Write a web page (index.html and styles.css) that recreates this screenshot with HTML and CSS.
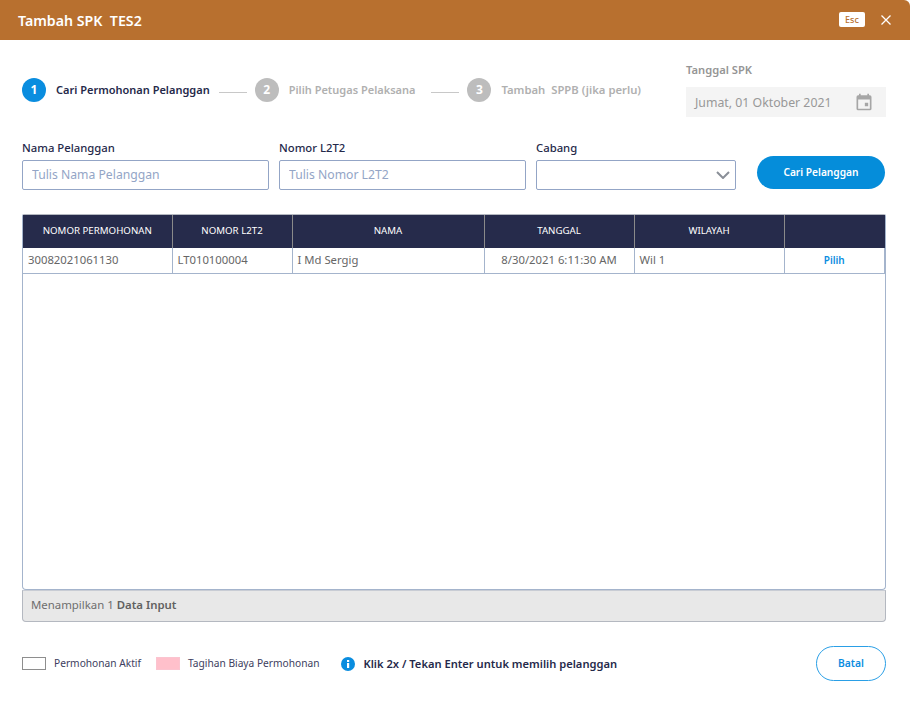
FILE: index.html
```html
<!DOCTYPE html>
<html lang="en">
<head>
    <meta charset="UTF-8">
    <meta name="viewport" content="width=device-width, initial-scale=1.0">
    <title>Tambah SPK</title>
    <link rel="stylesheet" href="styles.css">
</head>
<body>
    <header class="modalHeader">
        <h1 class="modalTitle">Tambah SPK&nbsp; TES2</h1>
        <span class="escKey">Esc</span>
        <svg class="closeIcon" width="10" height="10" viewBox="0 0 10 10"><path d="M0.5 0.5L9.5 9.5M9.5 0.5L0.5 9.5" stroke="#fff" stroke-width="1.3" fill="none"/></svg>
    </header>

    <main class="modalBody">
        <section class="topRow">
            <div class="stepper">
                <span class="stepNum stepActive">1</span>
                <span class="stepText stepTextActive">Cari Permohonan Pelanggan</span>
                <span class="stepLine"></span>
                <span class="stepNum">2</span>
                <span class="stepText">Pilih Petugas Pelaksana</span>
                <span class="stepLine stepLineWide"></span>
                <span class="stepNum">3</span>
                <span class="stepText stepTextLast">Tambah&nbsp; SPPB (jika perlu)</span>
            </div>
            <div class="dateField">
                <label class="dateLabel">Tanggal SPK</label>
                <div class="dateBox">
                    <span>Jumat, 01 Oktober 2021</span>
                    <svg width="20" height="20" viewBox="0 0 24 24"><path fill="#a6a6a6" d="M19 4h-1V2h-2v2H8V2H6v2H5a2 2 0 0 0-2 2v14a2 2 0 0 0 2 2h14a2 2 0 0 0 2-2V6a2 2 0 0 0-2-2zm0 16H5V9h14v11zm-6-7h4v4h-4z"/></svg>
                </div>
            </div>
        </section>

        <section class="searchRow">
            <div class="field fieldWide">
                <label>Nama Pelanggan</label>
                <input type="text" placeholder="Tulis Nama Pelanggan">
            </div>
            <div class="field fieldWide">
                <label>Nomor L2T2</label>
                <input type="text" placeholder="Tulis Nomor L2T2">
            </div>
            <div class="field fieldSelect">
                <label>Cabang</label>
                <div class="selectBox">
                    <svg width="14" height="8" viewBox="0 0 14 8"><path d="M1 1l6 6 6-6" stroke="#8a8f98" stroke-width="2" fill="none"/></svg>
                </div>
            </div>
            <button class="btnSearch" type="button">Cari Pelanggan</button>
        </section>

        <section class="gridWrap">
            <table class="dataGrid">
                <thead>
                    <tr>
                        <th class="colNo">NOMOR PERMOHONAN</th>
                        <th class="colL2">NOMOR L2T2</th>
                        <th class="colNama">NAMA</th>
                        <th class="colTgl">TANGGAL</th>
                        <th class="colWil">WILAYAH</th>
                        <th class="colAct"></th>
                    </tr>
                </thead>
                <tbody>
                    <tr>
                        <td>30082021061130</td>
                        <td>LT010100004</td>
                        <td>I Md Sergig</td>
                        <td class="center">8/30/2021 6:11:30 AM</td>
                        <td>Wil 1</td>
                        <td class="center"><a class="pickLink">Pilih</a></td>
                    </tr>
                </tbody>
            </table>
        </section>
        <div class="gridFooter">Menampilkan 1 <b>Data Input</b></div>

        <footer class="bottomRow">
            <span class="legendBox"></span>
            <span class="legendText">Permohonan Aktif</span>
            <span class="legendBox legendPink"></span>
            <span class="legendText">Tagihan Biaya Permohonan</span>
            <svg class="infoIcon" width="14" height="14" viewBox="0 0 14 14"><circle cx="7" cy="7" r="7" fill="#0a8ddf"/><rect x="6" y="6" width="2.2" height="5" fill="#fff"/><rect x="6" y="3" width="2.2" height="2" fill="#fff"/></svg>
            <span class="hint">Klik 2x / Tekan Enter untuk memilih pelanggan</span>
            <button class="btnCancel" type="button">Batal</button>
        </footer>
    </main>
</body>
</html>
```

FILE: styles.css
```css
* {
    box-sizing: border-box;
}
body {
    margin: 0;
    font-family: "Noto Sans", sans-serif;
    background-color: white;
    color: #25294a;
}
.modalHeader {
    height: 40px;
    background-color: #b8702f;
    border-top-right-radius: 6px;
    display: flex;
    align-items: center;
    padding: 0 19px 0 18px;
}
.modalTitle {
    margin: 0;
    flex: 1;
    font-size: 14.2px;
    font-weight: 600;
    color: white;
}
.escKey {
    width: 26px;
    height: 15px;
    margin-top: -1px;
    background-color: white;
    border-radius: 2px;
    color: #b8702f;
    font-size: 9px;
    font-weight: 500;
    line-height: 15px;
    text-align: center;
}
.closeIcon {
    margin-left: 16px;
}
.modalBody {
    padding: 24px 24px 0 22px;
}
.topRow {
    display: flex;
    justify-content: space-between;
    height: 53px;
}
.stepper {
    display: flex;
    align-items: center;
    height: 24px;
    margin-top: 14px;
}
.stepNum {
    width: 24px;
    height: 24px;
    border-radius: 50%;
    background-color: #bdbdbd;
    color: white;
    font-size: 12px;
    font-weight: 700;
    line-height: 24px;
    text-align: center;
}
.stepActive {
    background-color: #0a8ddf;
}
.stepText {
    margin: 0 0 2px 10px;
    font-size: 11px;
    font-weight: 600;
    color: #b0b0b0;
    white-space: nowrap;
}
.stepTextActive {
    color: #25294a;
}
.stepTextLast {
    font-size: 11.3px;
}
.stepLine {
    width: 28px;
    height: 1px;
    margin: 4px 8px 0 9px;
    background-color: #c8c8c8;
}
.stepLineWide {
    margin-left: 16px;
}
.dateField {
    width: 200px;
}
.dateLabel {
    display: block;
    height: 23px;
    font-size: 11.2px;
    font-weight: 600;
    line-height: 12px;
    color: #959595;
}
.dateBox {
    height: 30px;
    background-color: #f4f4f4;
    display: flex;
    align-items: center;
    justify-content: space-between;
    padding: 0 12px 0 9px;
    font-size: 12.3px;
    color: #989898;
}
.searchRow {
    display: flex;
    align-items: flex-end;
    gap: 10px;
    margin-top: 23px;
}
.field label {
    display: block;
    height: 20px;
    font-size: 11.3px;
    font-weight: 500;
    line-height: 16px;
}
.fieldWide {
    width: 247px;
}
.fieldSelect {
    width: 200px;
}
.field input, .selectBox {
    display: flex;
    align-items: center;
    justify-content: flex-end;
    width: 100%;
    height: 30px;
    padding: 0 9px 1px;
    border: 1px solid #93a5c6;
    border-radius: 2px;
    font-family: inherit;
    font-size: 12.2px;
    background-color: white;
}
.selectBox {
    padding-right: 5px;
}
.field input::placeholder {
    color: #93a5c6;
    opacity: 1;
}
.btnSearch {
    width: 128px;
    height: 33px;
    margin: 0 1px 1px 11px;
    padding: 0 0 2px;
    border: none;
    border-radius: 17px;
    background-color: #058dda;
    color: white;
    font-family: inherit;
    font-size: 10.2px;
    font-weight: 600;
    cursor: pointer;
}
.gridWrap {
    height: 376px;
    margin-top: 24px;
    border: 1px solid #a4b4cc;
    border-top-color: #b4b8c0;
    border-radius: 2px 2px 4px 4px;
}
.dataGrid {
    width: 100%;
    border-collapse: collapse;
    table-layout: fixed;
}
.dataGrid th {
    height: 33px;
    padding: 0 0 2px;
    background-color: #262b4b;
    border-left: 1px solid #8a8a8a;
    color: white;
    font-size: 9.7px;
    font-weight: 400;
}
.dataGrid th:first-child {
    border-left: none;
}
.dataGrid td {
    height: 25px;
    padding: 0 5px 2px;
    border-left: 1px solid #a4b4cc;
    border-bottom: 1px solid #a4b4cc;
    font-size: 11.3px;
    color: #666;
}
.dataGrid td:first-child {
    border-left: none;
}
.dataGrid td:last-child {
    border-right: 1px solid #a4b4cc;
}
.dataGrid .center {
    text-align: center;
}
.colNo { width: 149px; }
.colL2 { width: 120px; }
.colNama { width: 192px; }
.colTgl { width: 150px; }
.colWil { width: 150px; }
.pickLink {
    display: inline-block;
    margin-top: 2px;
    font-size: 10px;
    font-weight: 600;
    color: #0a8ddf;
}
.gridFooter {
    height: 32px;
    padding: 6px 8px;
    background-color: #e8e8e8;
    border: 1px solid #b4b8c0;
    border-top-color: #c8ccd4;
    border-radius: 0 0 4px 4px;
    font-size: 11.4px;
    line-height: 16px;
    color: #6e6e6e;
}
.gridFooter b {
    font-weight: 600;
    color: #616161;
}
.bottomRow {
    display: flex;
    align-items: center;
    height: 35px;
    margin-top: 24px;
}
.legendBox {
    width: 24px;
    height: 13px;
    border: 1px solid #8e8e8e;
}
.legendPink {
    margin-left: 15px;
    border-color: #fbc4d0;
    background-color: #ffc0cb;
}
.legendText {
    margin: 0 0 2px 8px;
    font-size: 10.2px;
    color: #3d4060;
}
.infoIcon {
    margin-left: 21px;
}
.hint {
    flex: 1;
    margin-left: 9px;
    font-size: 11.15px;
    font-weight: 600;
}
.btnCancel {
    width: 70px;
    height: 35px;
    padding: 0 0 2px;
    border: 1px solid #2a9fe6;
    border-radius: 18px;
    background-color: white;
    color: #0a8ddf;
    font-family: inherit;
    font-size: 10.3px;
    font-weight: 600;
    cursor: pointer;
}
```
